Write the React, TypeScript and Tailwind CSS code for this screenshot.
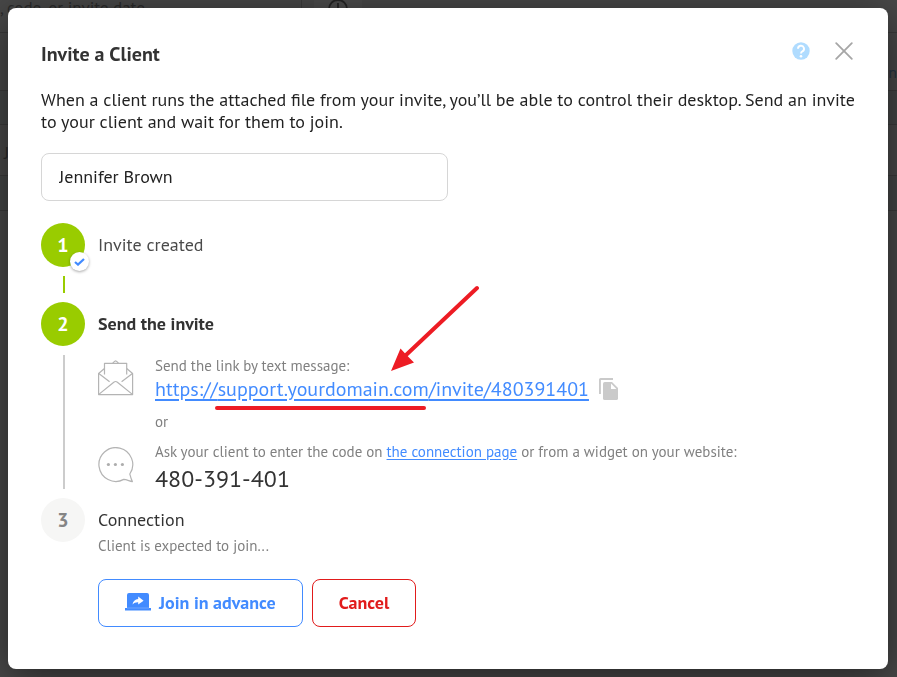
import type { ReactNode } from "react";

function HelpIcon() {
  return (
    <svg width="18" height="18" viewBox="0 0 18 18" aria-hidden="true">
      <circle cx="9" cy="9" r="8.7" fill="#b0dcff" />
      <path d="M6 6.8a3 3 0 1 1 4.4 2.6C9.3 10 9 10.5 9 11.6" fill="none" stroke="#fff" strokeWidth="1.9" />
      <circle cx="9" cy="14.3" r="1.3" fill="#fff" />
    </svg>
  );
}

function CloseIcon() {
  return (
    <svg width="18" height="18" viewBox="0 0 18 18" aria-hidden="true">
      <path d="M1.2 1.2l15.6 15.6M16.8 1.2L1.2 16.8" stroke="#a6a6a6" strokeWidth="1.8" strokeLinecap="round" />
    </svg>
  );
}

function EnvelopeIcon() {
  return (
    <svg width="36" height="36" viewBox="0 0 36 36" fill="none" stroke="#b4b4b4" strokeWidth="1.2" strokeLinejoin="round" aria-hidden="true">
      <path d="M6.5 8.5L0.6 13.5V34.6H34.6V13.5L28.7 8.5" />
      <path d="M6.5 14.5V3.3H28.7V14.5" />
      <path d="M14.6 3.3C16 1.6 16.8 0.8 17.6 0.8S19.2 1.6 20.6 3.3" />
      <path d="M0.8 13.6L11.6 21.8M34.4 13.6L23.6 21.8" />
      <path d="M0.8 34.4L15.8 22.2Q17.6 20.8 19.4 22.2L34.4 34.4" />
    </svg>
  );
}

function ChatIcon() {
  return (
    <svg width="36" height="36" viewBox="0 0 36 36" aria-hidden="true">
      <path d="M31.8 27A16.9 16.9 0 1 0 25.8 32.4C28.4 32.6 31 33.8 34.4 34.6C33 32 32.4 29.4 31.8 27Z" fill="none" stroke="#b4b4b4" strokeWidth="1.2" strokeLinejoin="round" />
      <g fill="#adadad">
        <circle cx="10.4" cy="17.5" r="1.6" />
        <circle cx="17.4" cy="17.5" r="1.6" />
        <circle cx="24.4" cy="17.5" r="1.6" />
      </g>
    </svg>
  );
}

function CopyIcon() {
  return (
    <svg width="19" height="22" viewBox="0 0 19 22" aria-hidden="true">
      <path d="M0 1.6Q0 0 1.6 0H14V1.9H1.9V16H0Z" fill="#cacaca" />
      <path d="M5.8 4H13L19 10V20.4Q19 22 17.4 22H5.8Q4 22 4 20.4V5.6Q4 4 5.8 4Z" fill="#cacaca" />
      <path d="M12 5.6V11H17.4Z" fill="#fff" />
    </svg>
  );
}

function LaptopShareIcon() {
  return (
    <svg width="26" height="18" viewBox="0 0 26 18" aria-hidden="true">
      <path d="M4 0H22Q24 0 24 2V15H26V17.6H0V15H2V2Q2 0 4 0Z" fill="#428bff" />
      <path d="M2 15H24" stroke="#8db8ff" strokeWidth="0.6" />
      <path d="M7.5 11.6C8 8.4 10 6.5 13.2 6.1V3.4L18.6 7.8L13.2 11.6V9.2C10.8 9.1 9 9.9 7.5 11.6Z" fill="#fff" />
    </svg>
  );
}

function PageBehind() {
  return (
    <div className="fixed inset-0 overflow-hidden bg-[#484848] text-[#2b2b2b]" aria-hidden="true">
      <div className="flex h-[33px] border-b border-[#3b3b3b] text-[17px]">
        <div className="flex h-full w-[302px] items-start border-r border-[#3b3b3b] leading-4 whitespace-nowrap">
          , code, or invite date
        </div>
        <div className="ml-3 flex w-12 justify-center bg-[#4c4c4c]">
          <svg width="20" height="20" viewBox="0 0 20 20" fill="none" stroke="#242424" strokeWidth="1.8">
            <circle cx="10" cy="9" r="9" />
            <path d="M10 3v6" />
          </svg>
        </div>
      </div>
      <div className="flex h-[58px] items-end justify-end border-b border-[#3b3b3b] pb-1.5 text-base text-[#253442]">en</div>
      <div className="h-[34px] border-b border-[#3b3b3b] bg-[#444646]" />
      <div className="h-[51px] border-b border-[#3b3b3b] pt-4 pl-1 text-lg leading-6">J</div>
      <div className="h-[35px] border-b border-[#3b3b3b] bg-[#444646]" />
    </div>
  );
}

function StepCircle({ children, done }: { children: ReactNode; done: boolean }) {
  return (
    <div
      className={
        done
          ? "relative flex size-11 items-center justify-center rounded-full bg-[#9c0] text-xl font-bold text-white"
          : "relative flex size-11 items-center justify-center rounded-full bg-[#f6f6f5] text-xl font-bold text-[#858585]"
      }
    >
      {children}
    </div>
  );
}

export default function App() {
  return (
    <div className="font-['PT_Sans',Lato,sans-serif] text-[#333]">
      <PageBehind />
      <div className="relative p-2 pr-[9px]">
        <main
          role="dialog"
          aria-labelledby="invite-title"
          className="rounded-lg bg-white px-[33px] pt-[30px] pb-[42px] shadow-[0_8px_40px_rgba(0,0,0,0.5)]"
        >
          <header className="flex items-center justify-between">
            <h1 id="invite-title" className="pt-1 text-xl leading-6 font-bold">Invite a Client</h1>
            <div className="flex items-center gap-[25px] pr-[2px] pb-[2px]">
              <button type="button" aria-label="Help"><HelpIcon /></button>
              <button type="button" aria-label="Close"><CloseIcon /></button>
            </div>
          </header>

          <p className="mt-[23px] text-[18px] leading-[22px] text-[#222]">
            When a client runs the attached file from your invite, you’ll be able to control their desktop. Send an invite
            to your client and wait for them to join.
          </p>

          <input
            type="text"
            aria-label="Client name"
            defaultValue="Jennifer Brown"
            className="mt-5 block h-12 w-full max-w-[407px] rounded-lg border border-[#d6d6d6] px-[17px] pb-[2px] text-[18px] text-[#222] outline-none"
          />

          <ol className="mt-[22px]">
            <li className="flex gap-[13px]">
              <div className="flex flex-col items-center">
                <StepCircle done>
                  1
                  <span className="absolute -right-1 -bottom-1 flex size-[19px] items-center justify-center rounded-full bg-white shadow-[0_1px_3px_rgba(0,0,0,0.35)]">
                    <svg width="11" height="8" viewBox="0 0 11 8" aria-hidden="true">
                      <path d="M1 4l3 2.6L10 1" fill="none" stroke="#428bff" strokeWidth="2.2" />
                    </svg>
                  </span>
                </StepCircle>
                <div className="my-[9px] ml-[2px] h-[17px] w-[2px] bg-[#9c0]" />
              </div>
              <p className="text-[18px] leading-[44px] text-[#4a4a4a]">Invite created</p>
            </li>

            <li className="flex gap-[13px]">
              <div className="flex flex-col items-center">
                <StepCircle done>2</StepCircle>
                <div className="my-[9px] ml-[2px] w-[2px] grow bg-[#ccc]" />
              </div>
              <div className="min-w-0 grow pb-[3px]">
                <h2 className="text-[18px] leading-[44px] font-bold">Send the invite</h2>
                <div className="mt-[9px] flex gap-[21px]">
                  <div className="shrink-0 pt-[5px]"><EnvelopeIcon /></div>
                  <div>
                    <p className="text-[15px] leading-[22px] text-[#808080]">Send the link by text message:</p>
                    <div className="flex items-center gap-[10px]">
                      <a href="#invite" className="text-[20px] leading-6 text-[#428bff] underline underline-offset-3">
                        https://
                        <span className="relative inline-block underline underline-offset-3">
                          support.yourdomain.com
                          <span className="absolute right-[3px] -bottom-[9px] left-[-3px] h-1 rounded-full bg-[#ed1c24]" />
                          <svg className="absolute right-[-50px] bottom-[30px]" width="88" height="86" viewBox="0 0 88 86" aria-hidden="true">
                            <path d="M86 3L14 71" stroke="#ed1c24" strokeWidth="4" strokeLinecap="round" />
                            <path d="M0 86L9.5 63.5L15.5 70L23 77.5Z" fill="#ed1c24" />
                          </svg>
                        </span>
                        /invite/480391401
                      </a>
                      <button type="button" aria-label="Copy link"><CopyIcon /></button>
                    </div>
                    <p className="mt-[10px] text-[15px] leading-[22px] text-[#808080]">or</p>
                  </div>
                </div>
                <div className="mt-2 flex gap-[21px]">
                  <div className="shrink-0 pt-[6px]"><ChatIcon /></div>
                  <div>
                    <p className="text-[15px] leading-[22px] text-[#808080]">
                      Ask your client to enter the code on{" "}
                      <a href="#connection" className="text-[#428bff] underline underline-offset-2">the connection page</a> or from a widget on your website:
                    </p>
                    <p className="text-[24px] leading-8">480-391-401</p>
                  </div>
                </div>
              </div>
            </li>

            <li className="flex gap-[13px]">
              <StepCircle done={false}>3</StepCircle>
              <div>
                <h2 className="text-[18px] leading-[44px]">Connection</h2>
                <p className="-mt-[7px] text-[15px] leading-[22px] text-[#808080]">Client is expected to join...</p>
                <div className="mt-[22px] flex gap-[9px] text-[18px] font-bold">
                  <button type="button" className="flex h-12 items-center justify-center gap-2 rounded-lg border border-[#428bff] px-[26px] pb-[2px] text-[#428bff]">
                    <LaptopShareIcon />
                    Join in advance
                  </button>
                  <button type="button" className="h-12 rounded-lg border border-[#e11b1b] px-[26px] pb-[2px] text-[#e11b1b]">Cancel</button>
                </div>
              </div>
            </li>
          </ol>
        </main>
      </div>
    </div>
  );
}
